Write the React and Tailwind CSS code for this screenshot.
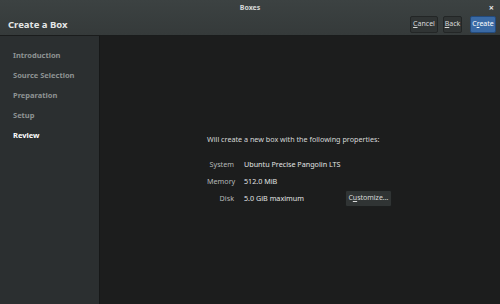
export default function App() {
  const steps = ["Introduction", "Source Selection", "Preparation", "Setup", "Review"]
  const props = [
    ["System", "Ubuntu Precise Pangolin LTS"],
    ["Memory", "512.0 MiB"],
    ["Disk", "5.0 GiB maximum"],
  ]

  return (
    <div
      className="w-[500px] h-[304px] flex flex-col bg-[#1c1d1d] overflow-hidden"
      style={{ fontFamily: '"Noto Sans", "DejaVu Sans", sans-serif' }}
    >
      {/* titlebar + header */}
      <div className="h-[36px] shrink-0 bg-gradient-to-b from-[#3c4242] to-[#353a3a] border-b border-[#1a1c1c] flex flex-col">
        <div className="h-[16px] relative flex items-center justify-center">
          <span className="text-[7px] font-bold text-[#d6d8d8]">Boxes</span>
          <span className="absolute right-[6px] top-[3px] text-[9px] leading-none font-bold text-[#e6e6e6]">×</span>
        </div>
        <div className="flex-1 flex items-center pl-[8px] pr-[4px]">
          <span className="text-[9.5px] font-bold text-[#e4e6e6]">Create a Box</span>
          <div className="ml-auto flex items-center pb-[2px]">
            <button className="h-[17px] w-[28px] rounded-[2px] bg-[#303434] border border-[#232626] text-[7px] text-[#d8dada]">
              <u>C</u>ancel
            </button>
            <button className="ml-[5px] h-[17px] w-[19px] rounded-[2px] bg-[#303434] border border-[#232626] text-[7px] text-[#d8dada]">
              <u>B</u>ack
            </button>
            <button className="ml-[8px] h-[17px] w-[26px] rounded-[2px] bg-[#3a6aa5] border border-[#234a7c] text-[7px] text-white">
              C<u>r</u>eate
            </button>
          </div>
        </div>
      </div>

      <div className="flex-1 flex min-h-0">
        {/* sidebar */}
        <div className="w-[100px] shrink-0 bg-[#2b2f30] border-r border-[#161818] flex flex-col pt-[14px] pl-[13px] gap-[8.5px]">
          {steps.map((s) => (
            <div
              key={s}
              className={
                s === "Review"
                  ? "text-[7.5px] font-bold text-white leading-[11.5px]"
                  : "text-[7.5px] font-bold text-[#8e9393] leading-[11.5px]"
              }
            >
              {s}
            </div>
          ))}
        </div>

        {/* main */}
        <div className="flex-1 flex flex-col pl-[107px] pt-[98px]">
          <div className="text-[7.2px] text-[#d6d8d8] leading-[11px]">
            Will create a new box with the following properties:
          </div>
          <div className="mt-[13px] flex flex-col gap-[5px]">
            {props.map(([k, v]) => (
              <div key={k} className="flex items-center h-[12px]">
                <span className="w-[27px] text-right text-[7.2px] text-[#b4b8b8]">{k}</span>
                <span className="ml-[10px] text-[7.2px] text-[#e2e4e4]">{v}</span>
                {k === "Disk" && (
                  <button className="ml-[41px] h-[17px] w-[47px] rounded-[2px] bg-[#303434] border border-[#1c1e1e] text-[7px] text-[#d8dada]">
                    C<u>u</u>stomize...
                  </button>
                )}
              </div>
            ))}
          </div>
        </div>
      </div>
    </div>
  )
}
